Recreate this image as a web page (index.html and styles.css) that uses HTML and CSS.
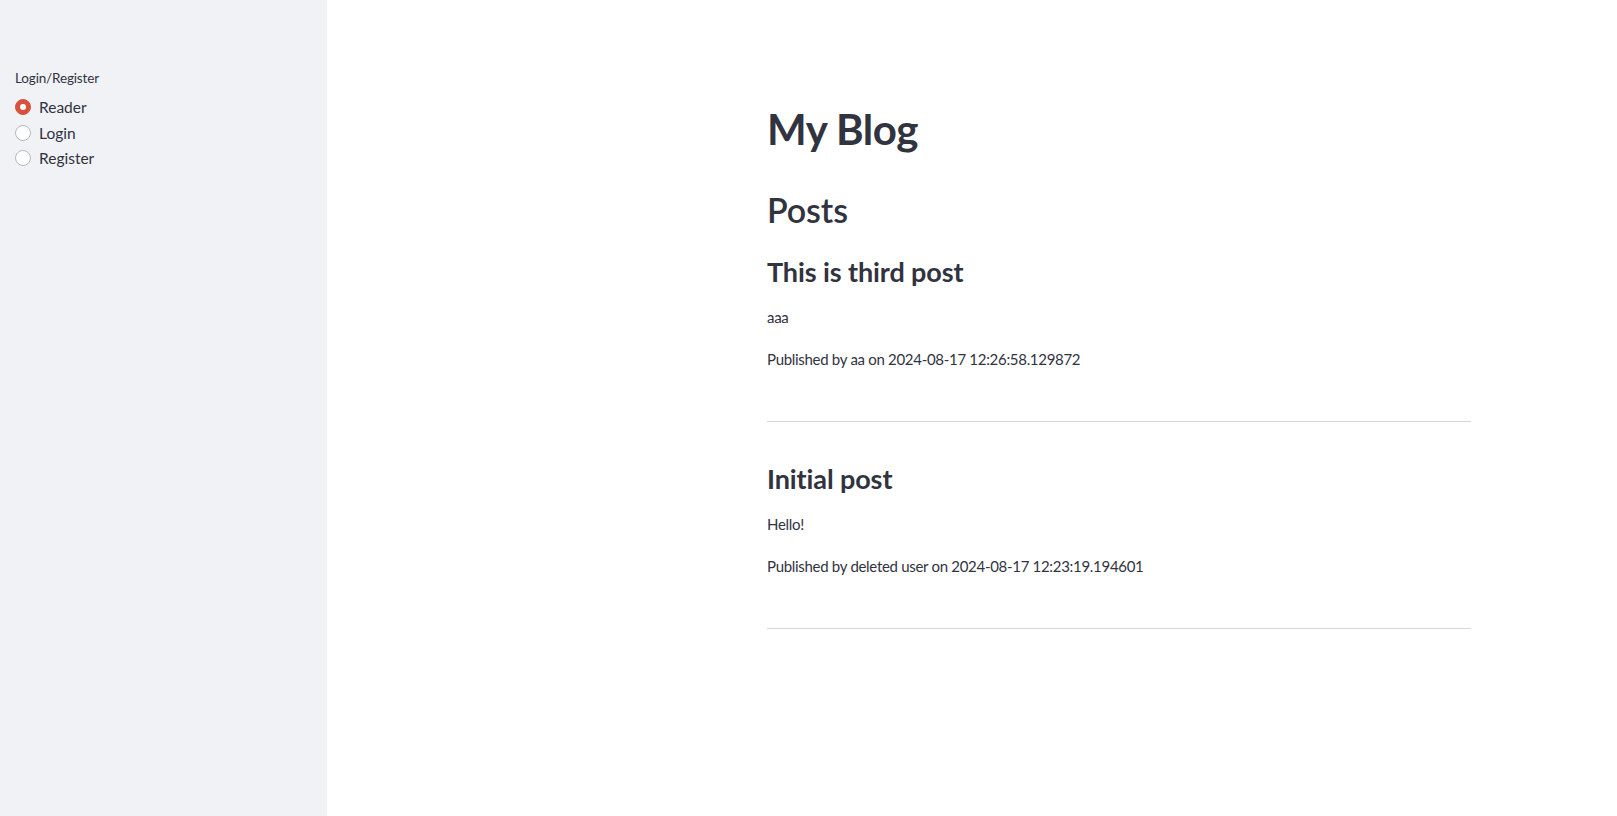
FILE: index.html
```html
<!DOCTYPE html>
<html lang="en">
<head>
<meta charset="utf-8">
<title>My Blog</title>
<link rel="stylesheet" href="styles.css">
</head>
<body>
<div class="app">
  <aside class="sidebar">
    <div class="radio-group">
      <div class="radio-label">Login/Register</div>
      <div class="radio-row"><span class="dot checked"></span><span class="radio-text">Reader</span></div>
      <div class="radio-row"><span class="dot"></span><span class="radio-text">Login</span></div>
      <div class="radio-row"><span class="dot"></span><span class="radio-text">Register</span></div>
    </div>
  </aside>
  <main class="main">
    <div class="block">
      <h1 class="title">My Blog</h1>
      <h2 class="subtitle">Posts</h2>
      <section class="post">
        <h3 class="post-title">This is third post</h3>
        <p class="post-text">aaa</p>
        <p class="post-text">Published by aa on 2024-08-17 12:26:58.129872</p>
        <hr class="divider">
      </section>
      <section class="post">
        <h3 class="post-title">Initial post</h3>
        <p class="post-text">Hello!</p>
        <p class="post-text">Published by deleted user on 2024-08-17 12:23:19.194601</p>
        <hr class="divider">
      </section>
    </div>
  </main>
</div>
</body>
</html>
```
FILE: styles.css
```css
html, body {
  margin: 0;
  padding: 0;
  height: 100%;
}
body {
  font-family: Lato, "Noto Sans", sans-serif;
  color: #31333f;
  background: #ffffff;
}
.app {
  display: flex;
  min-height: 816px;
}
.sidebar {
  width: 327px;
  flex: 0 0 327px;
  background: #f0f2f6;
  padding-top: 67px;
  box-sizing: border-box;
}
.radio-group {
  padding-left: 15px;
  display: flex;
  flex-direction: column;
}
.radio-label {
  font-size: 13.5px;
  line-height: 22px;
  letter-spacing: -0.15px;
  margin-bottom: 5px;
}
.radio-row {
  display: flex;
  align-items: center;
  gap: 8px;
  height: 25.8px;
  font-size: 15.5px;
}
.dot {
  width: 16px;
  height: 16px;
  box-sizing: border-box;
  border-radius: 50%;
  border: 1px solid #b5b8c0;
  background: #ffffff;
  display: flex;
  align-items: center;
  justify-content: center;
  flex: 0 0 16px;
}
.dot.checked {
  background: #d9503c;
  border-color: #d9503c;
}
.dot.checked::after {
  content: "";
  width: 6px;
  height: 6px;
  border-radius: 50%;
  background: #ffffff;
}
.main {
  flex: 1;
  display: flex;
  justify-content: flex-end;
  padding-right: 146px;
}
.block {
  width: 704px;
  padding-top: 104px;
}
.title {
  margin: 0;
  font-size: 42px;
  font-weight: 700;
  line-height: 50px;
  letter-spacing: -0.5px;
}
.subtitle {
  margin: 35px 0 0;
  font-size: 34px;
  font-weight: 600;
  line-height: 41px;
  letter-spacing: -0.1px;
}
.post-title {
  margin: 0 0 16px;
  font-size: 27px;
  font-weight: 700;
  line-height: 34px;
  letter-spacing: -0.1px;
}
.subtitle + .post .post-title {
  margin-top: 25px;
}
.post-text {
  margin: 0 0 16px;
  font-size: 15px;
  line-height: 25.6px;
  letter-spacing: -0.3px;
}
.post-text:last-of-type {
  margin-bottom: 0;
}
.divider {
  border: none;
  border-top: 1px solid #d6d6d9;
  margin: 49px 0 40px;
  height: 0;
}
```
